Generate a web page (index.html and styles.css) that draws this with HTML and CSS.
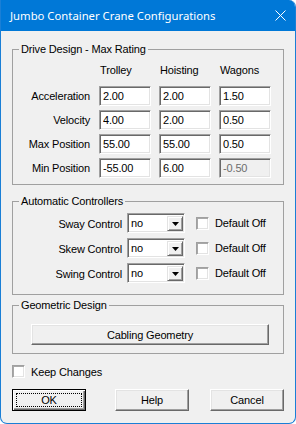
FILE: index.html
```html
<!DOCTYPE html>
<html lang="en">
<head>
    <meta charset="UTF-8" />
    <title>Jumbo Container Crane Configurations</title>
    <link rel="stylesheet" href="styles.css">
</head>
<body>
    <div class="window">
        <div class="titlebar">
            <span class="title">Jumbo Container Crane Configurations</span>
            <svg class="close" width="11" height="11" viewBox="0 0 11 11">
                <path d="M0.5 0.5 L10.5 10.5 M10.5 0.5 L0.5 10.5" stroke="#fff" stroke-width="1" fill="none" />
            </svg>
        </div>

        <div class="content">
            <fieldset class="group">
                <legend>Drive Design - Max Rating</legend>
                <div class="drive-grid">
                    <span></span>
                    <span class="col-head">Trolley</span>
                    <span class="col-head">Hoisting</span>
                    <span class="col-head">Wagons</span>

                    <span class="row-label">Acceleration</span>
                    <input class="field" type="text" value="2.00">
                    <input class="field" type="text" value="2.00">
                    <input class="field" type="text" value="1.50">

                    <span class="row-label">Velocity</span>
                    <input class="field" type="text" value="4.00">
                    <input class="field" type="text" value="2.00">
                    <input class="field" type="text" value="0.50">

                    <span class="row-label">Max Position</span>
                    <input class="field" type="text" value="55.00">
                    <input class="field" type="text" value="55.00">
                    <input class="field" type="text" value="0.50">

                    <span class="row-label">Min Position</span>
                    <input class="field" type="text" value="-55.00">
                    <input class="field" type="text" value="6.00">
                    <input class="field" type="text" value="-0.50" disabled>
                </div>
            </fieldset>

            <fieldset class="group controllers">
                <legend>Automatic Controllers</legend>
                <div class="ctrl-grid">
                    <span class="ctrl-label">Sway Control</span>
                    <div class="combo"><span class="combo-value">no</span><span class="combo-btn"><svg width="7" height="4" viewBox="0 0 7 4"><path d="M0 0 H7 L3.5 4 Z" fill="#000" /></svg></span></div>
                    <span class="check"></span>
                    <span class="check-text">Default Off</span>

                    <span class="ctrl-label">Skew Control</span>
                    <div class="combo"><span class="combo-value">no</span><span class="combo-btn"><svg width="7" height="4" viewBox="0 0 7 4"><path d="M0 0 H7 L3.5 4 Z" fill="#000" /></svg></span></div>
                    <span class="check"></span>
                    <span class="check-text">Default Off</span>

                    <span class="ctrl-label">Swing Control</span>
                    <div class="combo"><span class="combo-value">no</span><span class="combo-btn"><svg width="7" height="4" viewBox="0 0 7 4"><path d="M0 0 H7 L3.5 4 Z" fill="#000" /></svg></span></div>
                    <span class="check"></span>
                    <span class="check-text">Default Off</span>
                </div>
            </fieldset>

            <fieldset class="group geometry">
                <legend>Geometric Design</legend>
                <div class="geo-body">
                    <button class="btn wide">Cabling Geometry</button>
                </div>
            </fieldset>

            <div class="keep">
                <span class="check"></span>
                <span class="keep-text">Keep Changes</span>
            </div>

            <div class="actions">
                <button class="btn default"><span class="focus">OK</span></button>
                <button class="btn help">Help</button>
                <button class="btn cancel">Cancel</button>
            </div>
        </div>
    </div>
</body>
</html>
```

FILE: styles.css
```css
* {
    box-sizing: border-box;
}

body {
    margin: 0;
    background: #ffffff;
    font-family: "Liberation Sans", Arial, sans-serif;
    font-size: 11px;
    letter-spacing: -0.15px;
    color: #000;
}

/* Window frame */
.window {
    width: 296px;
    height: 424px;
    border: 1px solid #1a7fd6;
    border-top: none;
    border-radius: 0 7px 7px 7px;
    background: #f0f0f0;
    overflow: hidden;
}

.titlebar {
    height: 31px;
    background: #0078d7;
    color: #fff;
    display: flex;
    align-items: center;
    justify-content: space-between;
    padding: 0 9px 0 9px;
    font-family: "Noto Sans", "Open Sans", sans-serif;
    font-size: 11.3px;
    letter-spacing: 0;
}

.close {
    display: block;
}

.content {
    padding: 12px 11px 0 11px;
}

/* Group boxes */
.group {
    margin: 0;
    padding: 0;
    min-width: 0;
    border: 1px solid #a0a0a0;
}

.group legend {
    margin-left: 6px;
    padding: 0 2px;
    line-height: 13px;
}

.controllers {
    margin-top: 10px;
}

.geometry {
    margin-top: 4px;
}

/* Drive design table */
.drive-grid {
    display: grid;
    grid-template-columns: 78px repeat(3, 52px);
    grid-template-rows: 18px repeat(4, 20px);
    column-gap: 8px;
    row-gap: 4px;
    padding: 8px 0 6px 0;
}

.col-head {
    align-self: start;
    line-height: 13px;
    padding-left: 1px;
}

.row-label {
    text-align: right;
    line-height: 20px;
    padding-right: 1px;
}

.field {
    width: 52px;
    height: 20px;
    margin: 0;
    padding: 0 0 0 3px;
    font-family: "Liberation Sans", Arial, sans-serif;
    font-size: 11px;
    letter-spacing: -0.15px;
    color: #000;
    background: #fff;
    border: 1px solid;
    border-color: #a0a0a0 #fff #fff #a0a0a0;
    box-shadow: inset 1px 1px 0 #696969, inset -1px -1px 0 #e3e3e3;
    outline: none;
}

.field:disabled {
    background: #f0f0f0;
    color: #6d6d6d;
}

/* Controllers */
.ctrl-grid {
    display: grid;
    grid-template-columns: 114px 58px 24px auto;
    grid-template-rows: repeat(3, 20px);
    row-gap: 5px;
    padding: 5px 0 11px 0;
    align-items: center;
}

.ctrl-label {
    text-align: right;
    padding-right: 5px;
    padding-top: 2px;
}

.combo {
    display: flex;
    height: 20px;
    background: #fff;
    border: 1px solid;
    border-color: #a0a0a0 #fff #fff #a0a0a0;
    box-shadow: inset 1px 1px 0 #696969, inset -1px -1px 0 #e3e3e3;
    padding: 2px 1px 1px 2px;
}

.combo-value {
    flex: 1;
    line-height: 15px;
    padding-left: 1px;
}

.combo-btn {
    width: 16px;
    display: flex;
    align-items: center;
    justify-content: center;
    background: #f0f0f0;
    border: 1px solid;
    border-color: #e3e3e3 #696969 #696969 #e3e3e3;
    box-shadow: inset 1px 1px 0 #fff, inset -1px -1px 0 #a0a0a0;
}

.check {
    display: block;
    width: 13px;
    height: 13px;
    background: #fff;
    border: 1px solid;
    border-color: #a0a0a0 #fff #fff #a0a0a0;
    box-shadow: inset 1px 1px 0 #a8a8a8, inset -1px -1px 0 #e3e3e3;
}

.ctrl-grid .check {
    justify-self: end;
}

.check-text {
    padding-left: 6px;
}

/* Geometry */
.geo-body {
    padding: 12px 14px 8px 18px;
}

/* Buttons */
.btn {
    display: flex;
    align-items: center;
    justify-content: center;
    margin: 0;
    padding: 0;
    font-family: "Liberation Sans", Arial, sans-serif;
    font-size: 11px;
    letter-spacing: -0.15px;
    color: #000;
    background: #f0f0f0;
    border: 1px solid;
    border-color: #fff #696969 #696969 #fff;
    box-shadow: inset -1px -1px 0 #a0a0a0, inset 1px 1px 0 #e3e3e3;
}

.wide {
    width: 100%;
    height: 21px;
}

.keep {
    display: flex;
    align-items: center;
    margin-top: 11px;
    height: 13px;
}

.keep-text {
    margin-left: 6px;
}

.actions {
    display: flex;
    margin-top: 11px;
}

.actions .btn {
    width: 74px;
    height: 22px;
}

.btn.default {
    border: 1px solid #000;
    box-shadow: inset 1px 1px 0 #fff, inset -1px -1px 0 #696969, inset -2px -2px 0 #a0a0a0;
    padding: 3px;
}

.focus {
    flex: 1;
    align-self: stretch;
    display: flex;
    align-items: center;
    justify-content: center;
    border: 1px dotted #000;
}

.help {
    margin-left: 29px;
}

.cancel {
    margin-left: 21px;
}
```
